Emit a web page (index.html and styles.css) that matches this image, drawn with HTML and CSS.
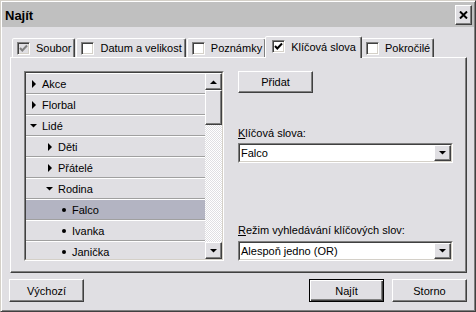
FILE: index.html
```html
<!DOCTYPE html>
<html lang="cs">
<head>
  <meta charset="UTF-8" />
  <title>Najít</title>
  <link rel="stylesheet" href="styles.css">
</head>
<body>

  <div class="window">
    <div class="titlebar">
      <span class="title">Najít</span>
      <button class="close">
        <svg width="9" height="8" viewBox="0 0 9 8"><path d="M1 0.5 L8 7.5 M8 0.5 L1 7.5" stroke="#000" stroke-width="2"/></svg>
      </button>
    </div>

    <div class="content">
      <div class="tabs">
        <div class="tab">
          <span class="check disabled"><svg width="11" height="11" viewBox="0 0 11 11"><path d="M2 5 L4.3 7.5 L9 2.5" stroke="#808080" stroke-width="2" fill="none"/></svg></span>
          Soubor
        </div>
        <div class="tab"><span class="check"></span>Datum a velikost</div>
        <div class="tab"><span class="check"></span>Poznámky</div>
        <div class="tab active">
          <span class="check"><svg width="11" height="11" viewBox="0 0 11 11"><path d="M2 5 L4.3 7.5 L9 2.5" stroke="#000" stroke-width="2" fill="none"/></svg></span>
          Klíčová slova
        </div>
        <div class="tab"><span class="check"></span>Pokročilé</div>
      </div>

      <div class="panel">
        <div class="tree">
          <div class="tree-inner">
            <ul class="rows">
              <li class="row"><svg class="icon" width="8" height="8"><path d="M2 0 L6 4 L2 8Z"/></svg>Akce</li>
              <li class="row"><svg class="icon" width="8" height="8"><path d="M2 0 L6 4 L2 8Z"/></svg>Florbal</li>
              <li class="row"><svg class="icon" width="8" height="8"><path d="M0 2 L7 2 L3.5 5.5Z"/></svg>Lidé</li>
              <li class="row l1"><svg class="icon" width="8" height="8"><path d="M2 0 L6 4 L2 8Z"/></svg>Děti</li>
              <li class="row l1"><svg class="icon" width="8" height="8"><path d="M2 0 L6 4 L2 8Z"/></svg>Přátelé</li>
              <li class="row l1"><svg class="icon" width="8" height="8"><path d="M0 2 L7 2 L3.5 5.5Z"/></svg>Rodina</li>
              <li class="row l2 selected"><span class="bullet"></span>Falco</li>
              <li class="row l2"><span class="bullet"></span>Ivanka</li>
              <li class="row l2"><span class="bullet"></span>Janička</li>
            </ul>
            <div class="scrollbar">
              <span class="sb-btn"><svg width="7" height="4"><path d="M0 4 L7 4 L3.5 0.5Z"/></svg></span>
              <span class="thumb"></span>
              <span class="track"></span>
              <span class="sb-btn"><svg width="7" height="4"><path d="M0 0 L7 0 L3.5 3.5Z"/></svg></span>
            </div>
          </div>
        </div>

        <div class="side">
          <button class="btn small">Přidat</button>
          <div class="label first"><u>K</u>líčová slova:</div>
          <div class="combo">
            <div class="combo-inner">
              <span class="value">Falco</span>
              <span class="drop"><svg width="7" height="4"><path d="M0 0 L7 0 L3.5 3.5Z"/></svg></span>
            </div>
          </div>
          <div class="label second"><u>R</u>ežim vyhledávání klíčových slov:</div>
          <div class="combo">
            <div class="combo-inner">
              <span class="value">Alespoň jedno (OR)</span>
              <span class="drop"><svg width="7" height="4"><path d="M0 0 L7 0 L3.5 3.5Z"/></svg></span>
            </div>
          </div>
        </div>
      </div>

      <div class="footer">
        <button class="btn">Výchozí</button>
        <button class="btn default push">Najít</button>
        <button class="btn">Storno</button>
      </div>
    </div>
  </div>

</body>
</html>
```

FILE: styles.css
```css
* {
  box-sizing: border-box;
}

body {
  margin: 0;
  font-family: "Liberation Sans", Arial, sans-serif;
  font-size: 11px;
  color: #000;
  background: #e0dfe3;
}

.window {
  width: 476px;
  height: 312px;
  padding: 1px;
  border: 1px solid;
  border-color: #d4d0c8 #404040 #404040 #d4d0c8;
  box-shadow: inset 1px 1px #fff, inset -1px -1px #808080;
  background: #e0dfe3;
  display: flex;
  flex-direction: column;
}

.titlebar {
  height: 25px;
  background: #c0c0c0;
  display: flex;
  align-items: center;
  justify-content: space-between;
  padding: 0 2px 0 3px;
}

.title {
  font-size: 13px;
  font-weight: bold;
  padding-top: 2px;
}

.close {
  width: 17px;
  height: 20px;
  padding: 0;
  border: 1px solid;
  border-color: #fff #404040 #404040 #fff;
  box-shadow: inset -1px -1px #808080;
  background: #e0dfe3;
  display: flex;
  align-items: center;
  justify-content: center;
}

.content {
  flex: 1;
  padding: 9px 7px 8px 8px;
  display: flex;
  flex-direction: column;
}

/* tabs */
.tabs {
  display: flex;
  align-items: flex-end;
  gap: 1px;
  height: 22px;
  margin: 0 0 -1px 2px;
  position: relative;
  z-index: 1;
}

.tab {
  height: 19px;
  margin-bottom: 1px;
  display: flex;
  align-items: center;
  gap: 6px;
  padding: 0 3px 0 4px;
  border: 1px solid;
  border-bottom: 0;
  border-color: #fff #404040 transparent #fff;
  border-radius: 2px 2px 0 0;
  box-shadow: inset -1px 0 #808080;
  background: #e0dfe3;
}

.tab.active {
  height: 22px;
  margin: 0 -2px;
  padding: 0 5px 2px 6px;
  position: relative;
  z-index: 1;
}

.check {
  width: 13px;
  height: 13px;
  border: 1px solid;
  border-color: #808080 #fff #fff #808080;
  box-shadow: inset 1px 1px #404040, inset -1px -1px #d4d0c8;
  background: #fff;
  display: flex;
}

.check.disabled {
  background: #e0dfe3;
}

/* panel */
.panel {
  height: 216px;
  border: 1px solid;
  border-color: #fff #404040 #404040 #fff;
  box-shadow: inset -1px -1px #808080;
  display: flex;
  gap: 14px;
  padding: 13px 0 0 13px;
}

.tree {
  width: 200px;
  height: 190px;
  border: 1px solid;
  border-color: #808080 #fff #fff #808080;
}

.tree-inner {
  height: 100%;
  border: 1px solid;
  border-color: #404040 #d4d0c8 #d4d0c8 #404040;
  display: flex;
  overflow: hidden;
}

.rows {
  flex: 1;
  list-style: none;
  margin: 0;
  padding: 0;
  overflow: hidden;
}

.row {
  height: 21px;
  border-top: 1px solid #fff;
  border-bottom: 1px solid #a0a0a0;
  display: flex;
  align-items: center;
  gap: 4px;
  padding-left: 4px;
}

.row.l1 {
  padding-left: 20px;
}

.row.l2 {
  padding-left: 36px;
  gap: 6px;
}

.row.selected {
  background: #b3b4c2;
}

.icon {
  flex: none;
}

.bullet {
  width: 4px;
  height: 4px;
  border-radius: 50%;
  background: #000;
}

.scrollbar {
  width: 17px;
  display: flex;
  flex-direction: column;
  background-color: #e0dfe3;
  background-image: conic-gradient(#fff 25%, transparent 0 50%, #fff 0 75%, transparent 0);
  background-size: 2px 2px;
}

.sb-btn,
.thumb,
.drop {
  border: 1px solid;
  border-color: #fff #404040 #404040 #fff;
  box-shadow: inset -1px -1px #808080;
  background: #e0dfe3;
}

.sb-btn {
  height: 17px;
  display: flex;
  align-items: center;
  justify-content: center;
}

.thumb {
  height: 35px;
}

.track {
  flex: 1;
}

/* right side */
.side {
  width: 215px;
  display: flex;
  flex-direction: column;
  align-items: flex-start;
}

.btn {
  width: 75px;
  height: 23px;
  padding: 0;
  font: inherit;
  color: #000;
  border: 1px solid;
  border-color: #fff #404040 #404040 #fff;
  box-shadow: inset -1px -1px #808080;
  background: #e0dfe3;
}

.btn.small {
  height: 22px;
}

.btn.default {
  border-color: #000;
  box-shadow: inset 1px 1px #fff, inset -1px -1px #404040, inset -2px -2px #808080;
}

.label {
  line-height: 13px;
  margin-bottom: 3px;
}

.label.first {
  margin-top: 34px;
}

.label.second {
  margin-top: 61px;
  margin-bottom: 4px;
}

.combo {
  width: 215px;
  height: 20px;
  border: 1px solid;
  border-color: #808080 #fff #fff #808080;
}

.combo-inner {
  height: 100%;
  border: 1px solid;
  border-color: #404040 #d4d0c8 #d4d0c8 #404040;
  background: #fff;
  display: flex;
  align-items: center;
}

.value {
  flex: 1;
  padding-left: 1px;
}

.drop {
  width: 17px;
  height: 16px;
  display: flex;
  align-items: center;
  justify-content: center;
}

/* bottom buttons */
.footer {
  display: flex;
  gap: 8px;
  margin: 6px 0 0 -1px;
}

.push {
  margin-left: auto;
}
```
